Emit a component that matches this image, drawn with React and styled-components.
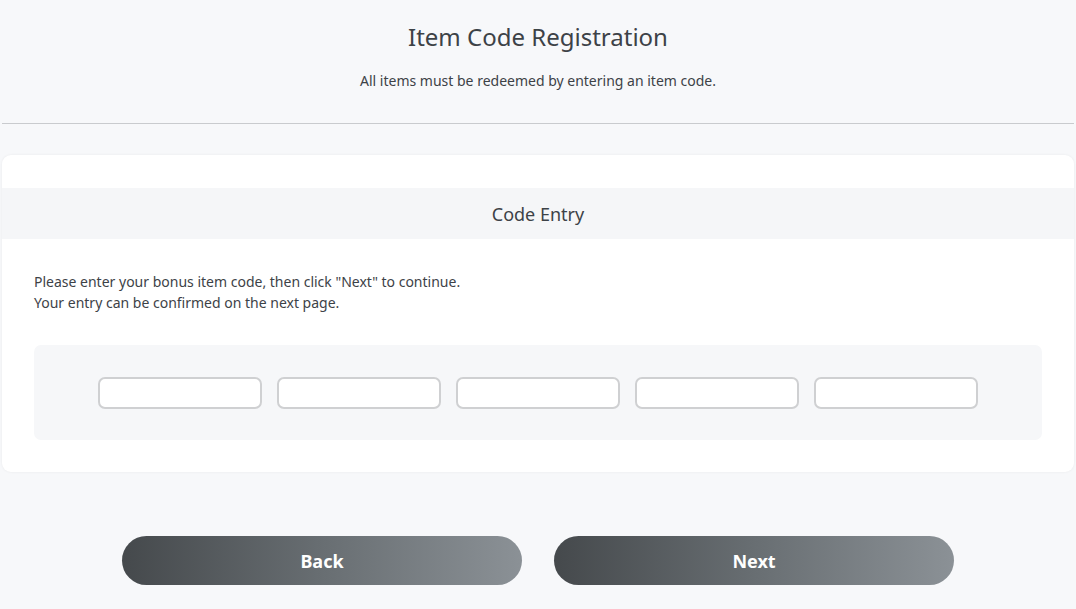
import React from "react";
import styled, { createGlobalStyle } from "styled-components";

const Global = createGlobalStyle`
  html, body { margin: 0; padding: 0; background: #f7f8fa; }
  body { font-family: "Noto Sans", "Open Sans", sans-serif; color: #3d4247; }
  * { box-sizing: border-box; }
`;

const Page = styled.div`
  padding: 0 2px;
  min-height: 609px;
`;

const Header = styled.header`
  padding-top: 21px;
  text-align: center;
`;

const Title = styled.h1`
  margin: 0;
  font-size: 24px;
  line-height: 32px;
  font-weight: 400;
  color: #3d4247;
`;

const Subtitle = styled.p`
  margin: 18px 0 0;
  font-size: 14px;
  line-height: 20px;
  color: #3d4247;
`;

const Divider = styled.hr`
  margin: 32px 0 0;
  border: 0;
  height: 1px;
  background: #c9cbce;
`;

const Card = styled.section`
  margin-top: 31px;
  background: #fff;
  border-radius: 9px;
  box-shadow: 0 0 3px rgba(0, 0, 0, 0.06);
  padding: 33px 0 32px;
`;

const Band = styled.h2`
  margin: 0;
  height: 51px;
  background: #f5f6f8;
  display: flex;
  align-items: center;
  justify-content: center;
  font-size: 18px;
  font-weight: 400;
  color: #3d4247;
`;

const Body = styled.div`
  padding: 32px 32px 0;
`;

const Text = styled.p`
  margin: 0;
  font-size: 14px;
  line-height: 21px;
  color: #3d4247;
`;

const CodeArea = styled.div`
  margin-top: 32px;
  background: #f6f7f9;
  border-radius: 7px;
  padding: 32px 0 31px;
  display: flex;
  justify-content: center;
  gap: 15px;
`;

const CodeInput = styled.input`
  width: 164px;
  height: 32px;
  border: 2px solid #cfd0d2;
  border-radius: 7px;
  background: #fff;
  font-family: inherit;
  font-size: 14px;
  padding: 0 8px;
  outline: none;
`;

const Actions = styled.div`
  margin-top: 64px;
  display: flex;
  justify-content: center;
  gap: 32px;
`;

const Button = styled.button`
  width: 400px;
  height: 49px;
  border: 0;
  border-radius: 25px;
  background: linear-gradient(90deg, #45494c 0%, #686e72 50%, #8b9196 100%);
  color: #fff;
  font-family: inherit;
  font-size: 18px;
  font-weight: 700;
  cursor: pointer;
`;

export default function App() {
  return (
    <Page>
      <Global />
      <Header>
        <Title>Item Code Registration</Title>
        <Subtitle>All items must be redeemed by entering an item code.</Subtitle>
      </Header>
      <Divider />
      <Card>
        <Band>Code Entry</Band>
        <Body>
          <Text>Please enter your bonus item code, then click "Next" to continue.</Text>
          <Text>Your entry can be confirmed on the next page.</Text>
          <CodeArea>
            {[0, 1, 2, 3, 4].map((i) => (
              <CodeInput key={i} type="text" aria-label={`Code part ${i + 1}`} />
            ))}
          </CodeArea>
        </Body>
      </Card>
      <Actions>
        <Button type="button">Back</Button>
        <Button type="button">Next</Button>
      </Actions>
    </Page>
  );
}
